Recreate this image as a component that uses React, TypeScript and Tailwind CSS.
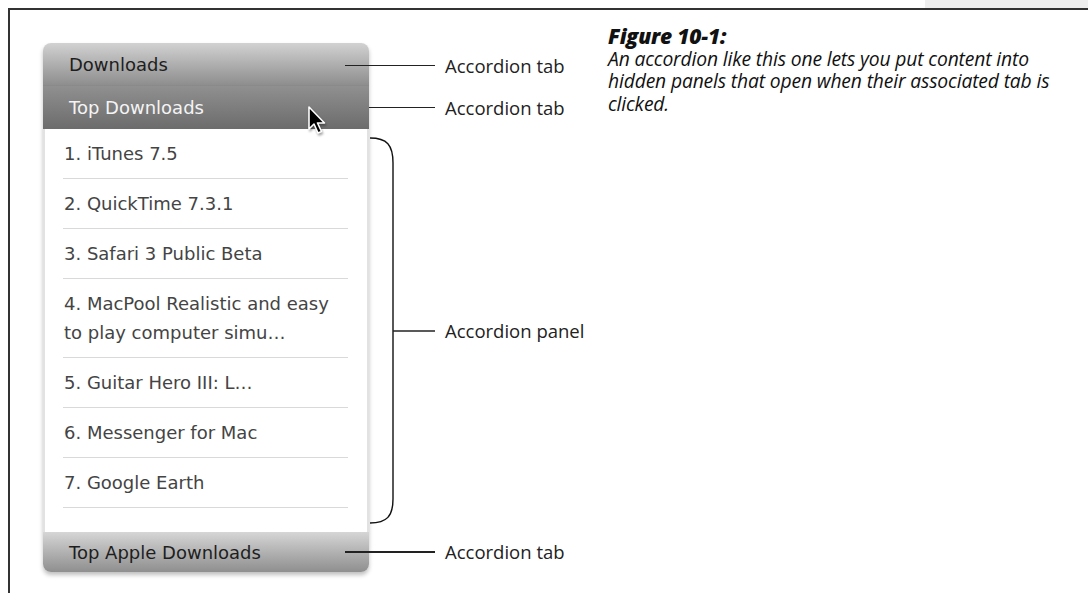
import React from 'react'

const items: string[][] = [
  ['1. iTunes 7.5'],
  ['2. QuickTime 7.3.1'],
  ['3. Safari 3 Public Beta'],
  ['4. MacPool Realistic and easy', 'to play computer simu…'],
  ['5. Guitar Hero III: L…'],
  ['6. Messenger for Mac'],
  ['7. Google Earth'],
]

function Cursor() {
  return (
    <svg width="20" height="31" viewBox="0 0 20 31" className="absolute left-[264px] top-[19px] z-10 drop-shadow-[1px_2px_1px_rgba(0,0,0,0.35)]">
      <path
        d="M2 2 L2 24 L7 19 L11 28 L14.5 26.5 L10.5 18 L17.5 18 Z"
        fill="#000"
        stroke="#fff"
        strokeWidth="1.6"
        strokeLinejoin="round"
      />
    </svg>
  )
}

function Label({ text }: { text: string }) {
  return (
    <div className="flex items-center">
      <div className="w-[90px] h-[1.5px] bg-[#222]" />
      <span className="ml-[10px] text-[18.5px] text-[#222] whitespace-nowrap" style={{ fontFamily: '"Open Sans", sans-serif' }}>
        {text}
      </span>
    </div>
  )
}

export default function App() {
  const tabFont = { fontFamily: '"DejaVu Sans", Verdana, sans-serif' }
  return (
    <div className="w-[1088px] h-[593px] bg-white overflow-hidden">
      <div className="flex justify-end h-[8px]">
        <div className="w-[163px] bg-[#efefef]" />
      </div>
      <div className="ml-[8px] h-[585px] border-t-2 border-l-2 border-[#333] flex items-start pl-[33px] pt-[15px]">
        {/* Accordion */}
        <div className="mt-[18px] w-[326px] shrink-0 rounded-[8px] shadow-[0_3px_4px_rgba(0,0,0,0.25)]" style={tabFont}>
          <div className="h-[43px] flex items-center pl-[26px] rounded-t-[8px] bg-gradient-to-b from-[#d2d2d2] to-[#8e8e8e] text-[18px] text-[#1e1e1e] border-b border-[#8a8a8a]">
            Downloads
          </div>
          <div className="relative h-[43px] flex items-center pl-[26px] bg-gradient-to-b from-[#909090] to-[#6c6c6c] text-[18px] text-[#f4f4f4]">
            Top Downloads
            <Cursor />
          </div>
          <div className="bg-white border-x-2 border-[#e2e2e2] pl-[18px] pr-[19px] pb-[24px]">
            {items.map((lines, i) => (
              <div key={i} className="py-[10px] border-b border-[#d9d9d9] text-[18px] leading-[29px] text-[#444] pl-[1px]">
                {lines.map((l, j) => (
                  <div key={j} className="whitespace-nowrap">{l}</div>
                ))}
              </div>
            ))}
          </div>
          <div className="h-[40px] flex items-center pl-[26px] rounded-b-[8px] bg-gradient-to-b from-[#d6d6d6] to-[#8f8f8f] text-[18px] text-[#1e1e1e]">
            Top Apple Downloads
          </div>
        </div>

        {/* Annotations */}
        <div className="mt-[18px] -ml-[24px] w-[263px] shrink-0 flex flex-col">
          <div className="h-[43px] flex items-center pt-[2px]">
            <Label text="Accordion tab" />
          </div>
          <div className="h-[43px] flex items-center">
            <Label text="Accordion tab" />
          </div>
          <div className="h-[403px] flex items-center">
            <svg width="90" height="403" viewBox="0 0 90 403" className="shrink-0">
              <path d="M25 9 C42 9 48 16 48 34 L48 370 C48 387 42 394 25 394" fill="none" stroke="#111" strokeWidth="1.4" />
              <path d="M48 202 H90" stroke="#222" strokeWidth="1.5" />
            </svg>
            <span className="ml-[10px] text-[18.5px] text-[#222] whitespace-nowrap" style={{ fontFamily: '"Open Sans", sans-serif' }}>
              Accordion panel
            </span>
          </div>
          <div className="h-[40px] flex items-center">
            <Label text="Accordion tab" />
          </div>
        </div>

        {/* Caption */}
        <div className="text-[#111] italic whitespace-nowrap leading-[22.5px]" style={{ fontFamily: '"Open Sans", sans-serif' }}>
          <div className="font-extrabold text-[21px] tracking-[-0.2px]">Figure 10-1:</div>
          <div className="text-[19.3px] tracking-[-0.15px]">
            An accordion like this one lets you put content into
            <br />
            hidden panels that open when their associated tab is
            <br />
            clicked.
          </div>
        </div>
      </div>
    </div>
  )
}
